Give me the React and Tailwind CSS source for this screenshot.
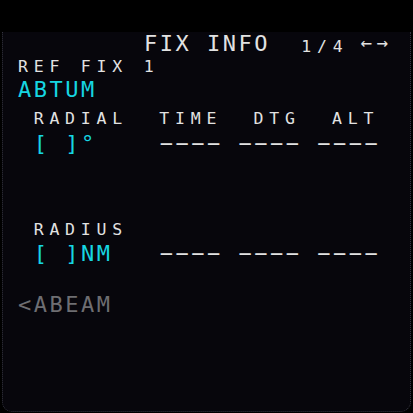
const big = "font-['DejaVu_Sans_Mono',monospace] text-[22px] leading-none tracking-[2.5px]";
const small = "font-['DejaVu_Sans_Mono',monospace] text-[16.5px] leading-none tracking-[5.77px]";

const Row = ({ h, children }) => (
  <div className={`flex items-end whitespace-pre ${h}`}>{children}</div>
);

const Dashes = () => <span className="text-[#e2e2e2]">−−−−</span>;

export default function App() {
  return (
    <div className="w-[413px] h-[413px] bg-black overflow-hidden pt-[32px]">
      <div className="mx-[2px] h-[380px] bg-[#07060c] border-x border-b border-dotted border-[#34343f] rounded-b-[10px] pl-[15px]">
        <Row h="h-[23px]">
          <span className={`${big} text-[#e2e2e2]`}>{"        FIX INFO"}</span>
          <span className={`${small} text-[#e2e2e2]`}>{"  1/4"}</span>
          <span className="ml-[12px] mb-[3px] font-['DejaVu_Sans_Mono',monospace] text-[19px] leading-none tracking-[4.5px] text-[#e2e2e2]">←→</span>
        </Row>
        <Row h="h-[20px]">
          <span className={`${small} text-[#e2e2e2]`}>REF FIX 1</span>
        </Row>
        <Row h="h-[26px]">
          <span className={`${big} text-[#16d6e2]`}>ABTUM</span>
        </Row>
        <Row h="h-[26px]">
          <span className={`${small} text-[#e2e2e2]`}>{" RADIAL  TIME  DTG  ALT"}</span>
        </Row>
        <Row h="h-[28px]">
          <span className={big}>
            <span className="text-[#16d6e2]">{" [ ]°"}</span>
            {"    "}
            <Dashes />
            {" "}
            <Dashes />
            {" "}
            <Dashes />
          </span>
        </Row>
        <Row h="h-[83px]">
          <span className={`${small} text-[#e2e2e2]`}>{" RADIUS"}</span>
        </Row>
        <Row h="h-[27px]">
          <span className={big}>
            <span className="text-[#16d6e2]">{" [ ]NM"}</span>
            {"   "}
            <Dashes />
            {" "}
            <Dashes />
            {" "}
            <Dashes />
          </span>
        </Row>
        <Row h="h-[51px]">
          <span className={`${big} text-[#6e6e72]`}>{"<ABEAM"}</span>
        </Row>
      </div>
    </div>
  );
}
